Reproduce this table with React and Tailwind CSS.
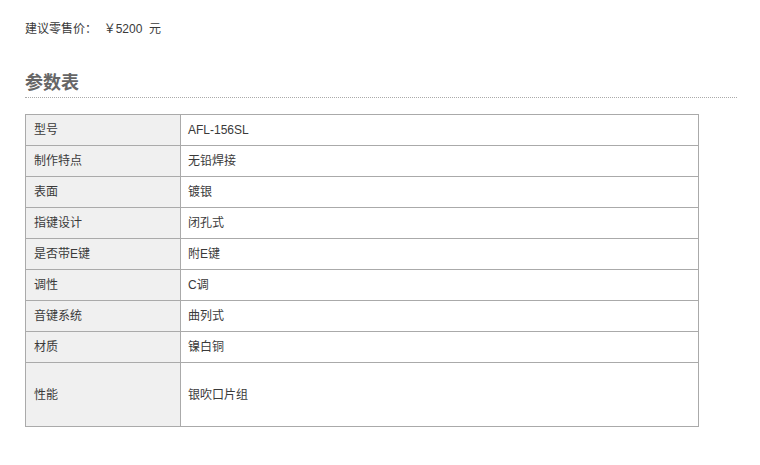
export default function App() {
    const rows = [
        ['型号', 'AFL-156SL'],
        ['制作特点', '无铅焊接'],
        ['表面', '镀银'],
        ['指键设计', '闭孔式'],
        ['是否带E键', '附E键'],
        ['调性', 'C调'],
        ['音键系统', '曲列式'],
        ['材质', '镍白铜'],
    ];

    return (
        <div
            className="w-[760px] h-[465px] bg-white text-[12px] text-[#3a3a3a]"
            style={{ fontFamily: '"Liberation Sans", "Noto Sans CJK SC", sans-serif' }}
        >
            <div className="pl-[25px] pt-[21px] leading-[16px] whitespace-pre">
                {'建议零售价：  ￥5200  元'}
            </div>
            <div className="ml-[25px] mr-[23px] mt-[34px] pb-[2px] border-b border-dotted border-[#aaa] text-[18px] leading-[24px] font-bold text-[#666]">
                参数表
            </div>
            <table className="ml-[25px] mt-[16px] w-[674px] border-collapse border border-[#aaa]">
                <tbody>
                    {rows.map(([k, v]) => (
                        <tr key={k} className="h-[31px]">
                            <td className="w-[155px] border border-[#aaa] bg-[#f0f0f0] pl-[8px] align-middle">{k}</td>
                            <td className="border border-[#aaa] pl-[7px] align-middle">{v}</td>
                        </tr>
                    ))}
                    <tr className="h-[64px]">
                        <td className="w-[155px] border border-[#aaa] bg-[#f0f0f0] pl-[8px] align-middle">性能</td>
                        <td className="border border-[#aaa] pl-[7px] align-middle">银吹口片组</td>
                    </tr>
                </tbody>
            </table>
        </div>
    );
}
